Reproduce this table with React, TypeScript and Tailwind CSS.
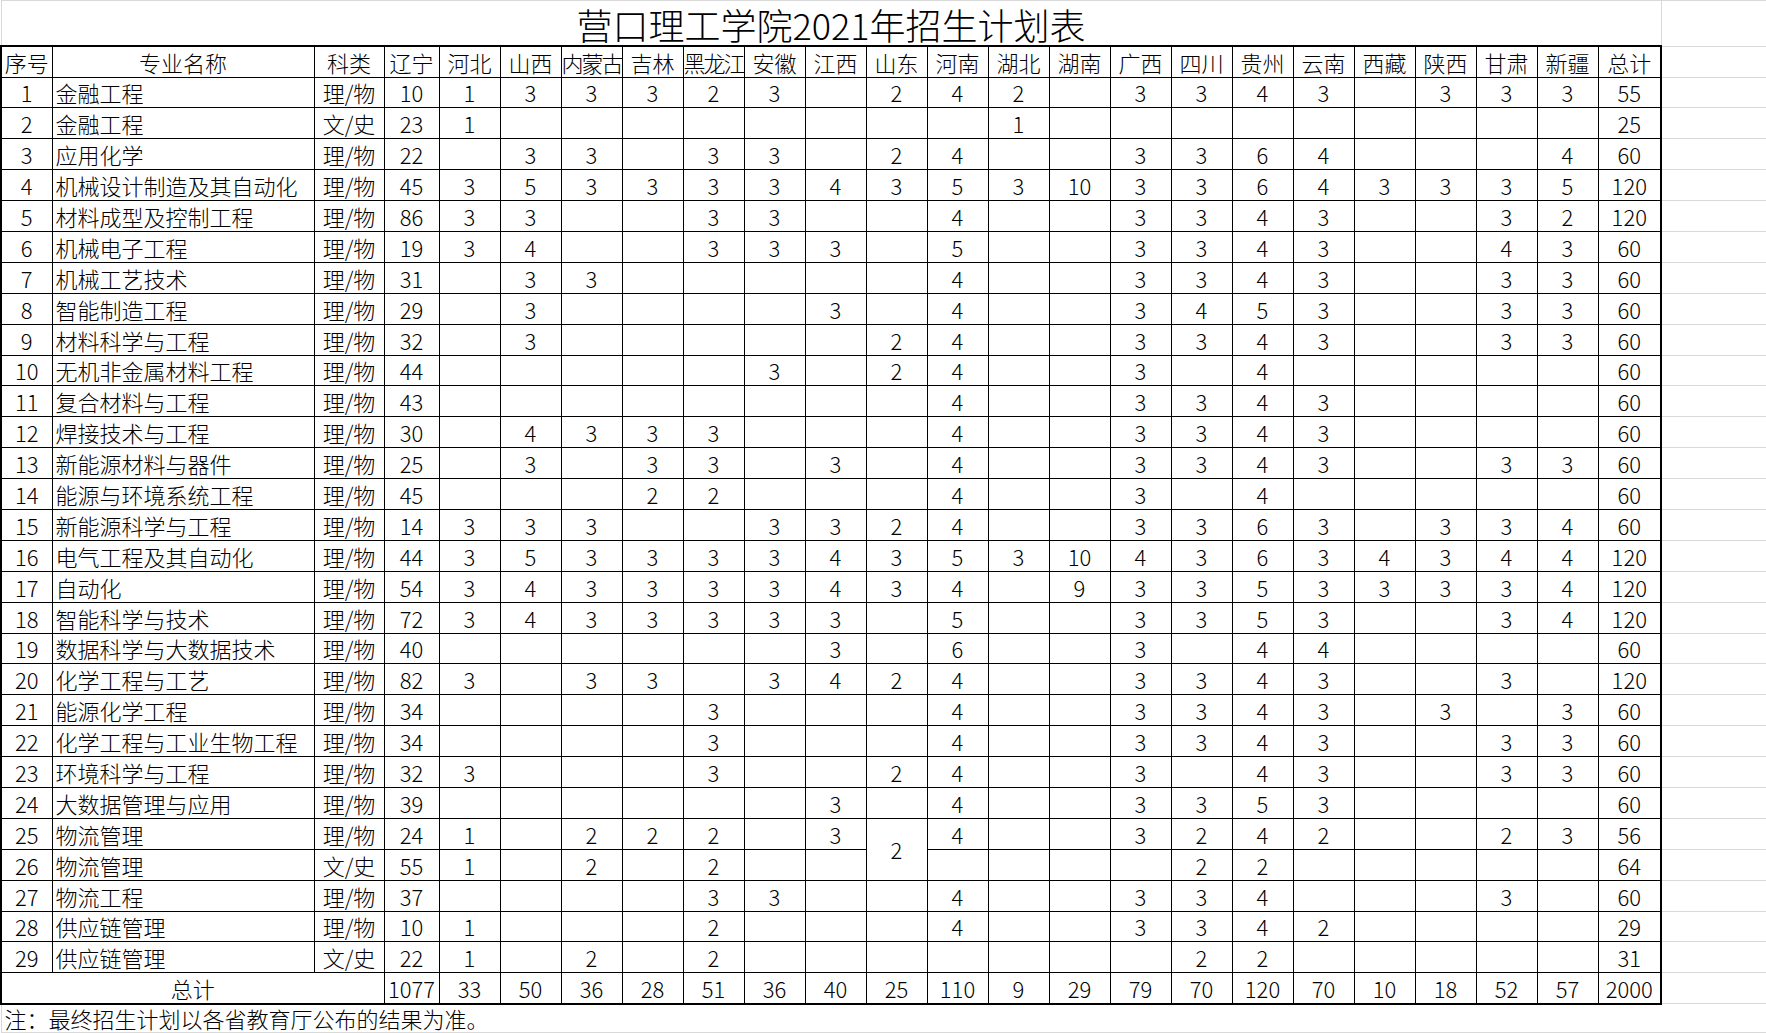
const provinces = [
  "辽宁", "河北", "山西", "内蒙古", "吉林", "黑龙江", "安徽", "江西", "山东", "河南",
  "湖北", "湖南", "广西", "四川", "贵州", "云南", "西藏", "陕西", "甘肃", "新疆", "总计",
];

// "." = empty cell, "x" = covered by the merged 山东 cell above
const rows: [string, string, string][] = [
  ["金融工程", "理/物", "10 1 3 3 3 2 3 . 2 4 2 . 3 3 4 3 . 3 3 3 55"],
  ["金融工程", "文/史", "23 1 . . . . . . . . 1 . . . . . . . . . 25"],
  ["应用化学", "理/物", "22 . 3 3 . 3 3 . 2 4 . . 3 3 6 4 . . . 4 60"],
  ["机械设计制造及其自动化", "理/物", "45 3 5 3 3 3 3 4 3 5 3 10 3 3 6 4 3 3 3 5 120"],
  ["材料成型及控制工程", "理/物", "86 3 3 . . 3 3 . . 4 . . 3 3 4 3 . . 3 2 120"],
  ["机械电子工程", "理/物", "19 3 4 . . 3 3 3 . 5 . . 3 3 4 3 . . 4 3 60"],
  ["机械工艺技术", "理/物", "31 . 3 3 . . . . . 4 . . 3 3 4 3 . . 3 3 60"],
  ["智能制造工程", "理/物", "29 . 3 . . . . 3 . 4 . . 3 4 5 3 . . 3 3 60"],
  ["材料科学与工程", "理/物", "32 . 3 . . . . . 2 4 . . 3 3 4 3 . . 3 3 60"],
  ["无机非金属材料工程", "理/物", "44 . . . . . 3 . 2 4 . . 3 . 4 . . . . . 60"],
  ["复合材料与工程", "理/物", "43 . . . . . . . . 4 . . 3 3 4 3 . . . . 60"],
  ["焊接技术与工程", "理/物", "30 . 4 3 3 3 . . . 4 . . 3 3 4 3 . . . . 60"],
  ["新能源材料与器件", "理/物", "25 . 3 . 3 3 . 3 . 4 . . 3 3 4 3 . . 3 3 60"],
  ["能源与环境系统工程", "理/物", "45 . . . 2 2 . . . 4 . . 3 . 4 . . . . . 60"],
  ["新能源科学与工程", "理/物", "14 3 3 3 . . 3 3 2 4 . . 3 3 6 3 . 3 3 4 60"],
  ["电气工程及其自动化", "理/物", "44 3 5 3 3 3 3 4 3 5 3 10 4 3 6 3 4 3 4 4 120"],
  ["自动化", "理/物", "54 3 4 3 3 3 3 4 3 4 . 9 3 3 5 3 3 3 3 4 120"],
  ["智能科学与技术", "理/物", "72 3 4 3 3 3 3 3 . 5 . . 3 3 5 3 . . 3 4 120"],
  ["数据科学与大数据技术", "理/物", "40 . . . . . . 3 . 6 . . 3 . 4 4 . . . . 60"],
  ["化学工程与工艺", "理/物", "82 3 . 3 3 . 3 4 2 4 . . 3 3 4 3 . . 3 . 120"],
  ["能源化学工程", "理/物", "34 . . . . 3 . . . 4 . . 3 3 4 3 . 3 . 3 60"],
  ["化学工程与工业生物工程", "理/物", "34 . . . . 3 . . . 4 . . 3 3 4 3 . . 3 3 60"],
  ["环境科学与工程", "理/物", "32 3 . . . 3 . . 2 4 . . 3 . 4 3 . . 3 3 60"],
  ["大数据管理与应用", "理/物", "39 . . . . . . 3 . 4 . . 3 3 5 3 . . . . 60"],
  ["物流管理", "理/物", "24 1 . 2 2 2 . 3 2 4 . . 3 2 4 2 . . 2 3 56"],
  ["物流管理", "文/史", "55 1 . 2 . 2 . . x . . . . 2 2 . . . . . 64"],
  ["物流工程", "理/物", "37 . . . . 3 3 . . 4 . . 3 3 4 . . . 3 . 60"],
  ["供应链管理", "理/物", "10 1 . . . 2 . . . 4 . . 3 3 4 2 . . . . 29"],
  ["供应链管理", "文/史", "22 1 . 2 . 2 . . . . . . . 2 2 . . . . . 31"],
];

const totals = "1077 33 50 36 28 51 36 40 25 110 9 29 79 70 120 70 10 18 52 57 2000".split(" ");

const cell = "border border-black text-center p-0 leading-none";
const extra = "border-y border-[#d9d9d9] p-0";

const App = () => {
  return (
    <div className="w-[1766px] h-[1033px] overflow-hidden bg-white text-black font-['Noto_Sans_CJK_SC','Liberation_Sans',sans-serif] font-light text-[22px]">
      <table className="table-fixed border-collapse w-[1766px]">
        <colgroup>
          <col className="w-[51px]" />
          <col className="w-[262px]" />
          <col className="w-[70px]" />
          <col className="w-[55px]" />
          {provinces.slice(1, 20).map((p) => (
            <col key={p} className="w-[61px]" />
          ))}
          <col className="w-[63px]" />
          <col className="w-[106px]" />
        </colgroup>
        <tbody>
          {/* Title */}
          <tr className="h-[45px]">
            <td colSpan={24} className="border-t border-l border-[#d9d9d9] p-0 pt-[2px] text-center align-middle text-[36px] leading-[42px]">
              营口理工学院2021年招生计划表
            </td>
            <td className="border border-r-0 border-[#d9d9d9] p-0" />
          </tr>

          {/* Header */}
          <tr className="h-[31px]">
            <td className={`${cell} border-t-2 border-l-2`}>序号</td>
            <td className={`${cell} border-t-2`}>专业名称</td>
            <td className={`${cell} border-t-2`}>科类</td>
            {provinces.map((p, i) => (
              <td
                key={p}
                className={`${cell} border-t-2 whitespace-nowrap overflow-hidden ${i === 20 ? "border-r-2" : ""} ${p === "内蒙古" || p === "黑龙江" ? "tracking-[-2px]" : ""}`}
              >
                {p}
              </td>
            ))}
            <td className={extra} />
          </tr>

          {rows.map(([name, kind, vals], r) => {
            const v = vals.split(" ");
            return (
              <tr key={r} className="h-[30.9px]">
                <td className={`${cell} border-l-2`}>{r + 1}</td>
                <td className="border border-black p-0 pl-[3px] text-left leading-none whitespace-nowrap">{name}</td>
                <td className={`${cell} whitespace-nowrap`}>{kind}</td>
                {v.map((n, i) => {
                  if (n === "x") return null;
                  return (
                    <td
                      key={i}
                      rowSpan={r === 24 && i === 8 ? 2 : undefined}
                      className={`${cell} ${i === 20 ? "border-r-2" : ""}`}
                    >
                      {n === "." ? "" : n}
                    </td>
                  );
                })}
                <td className={extra} />
              </tr>
            );
          })}

          {/* Total */}
          <tr className="h-[30.9px]">
            <td colSpan={3} className={`${cell} border-l-2 border-b-2`}>总计</td>
            {totals.map((t, i) => (
              <td key={i} className={`${cell} border-b-2 ${i === 20 ? "border-r-2" : ""}`}>
                {t}
              </td>
            ))}
            <td className={extra} />
          </tr>

          {/* Note */}
          <tr className="h-[29px]">
            <td colSpan={24} className="border-b border-l border-[#d9d9d9] p-0 pl-[3px] text-left leading-none">
              注：最终招生计划以各省教育厅公布的结果为准。
            </td>
            <td className={extra} />
          </tr>
        </tbody>
      </table>
    </div>
  );
};

export default App;
